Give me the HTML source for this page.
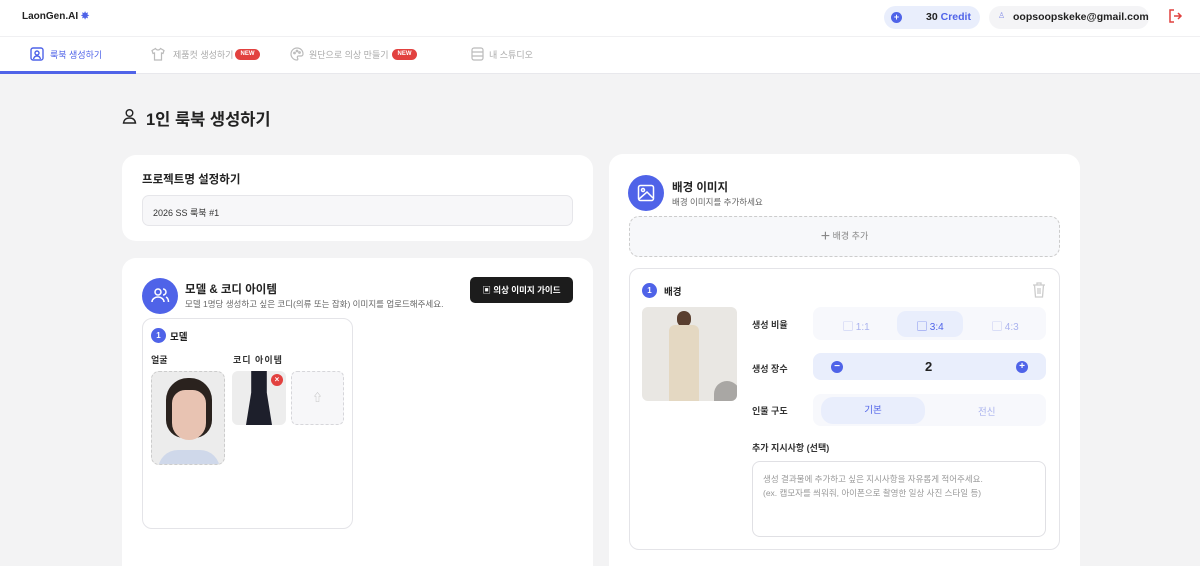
<!DOCTYPE html>
<html><head><meta charset="utf-8"><style>
*{box-sizing:border-box;margin:0;padding:0}
html,body{width:1200px;height:566px;overflow:hidden}
body{background:#f3f3f4;font-family:"Liberation Sans","Noto Sans CJK KR",sans-serif;color:#222;position:relative}
.a{position:absolute}
.hdr{left:0;top:0;width:1200px;height:74px;background:#fff;border-bottom:1px solid #e8e8ec}
.card{background:#fff;border-radius:14px;position:absolute}
.t{font-size:10px;color:#bbb}
.lbl{font-size:9px;font-weight:bold;color:#333}
</style></head><body>
<div class="a hdr"></div>
<div class="a" style="left:0;top:36px;width:1200px;border-top:1px solid #f0f0f2"></div>
<div class="a" style="left:22px;top:11px;font-size:10px;font-weight:bold">LaonGen.AI <span style="color:#4f63e8">✸</span></div>
<div class="a" style="left:884px;top:6px;width:96px;height:23px;border-radius:12px;background:#e9eefc"></div>
<div class="a" style="left:891px;top:12px;width:11px;height:11px;border-radius:50%;background:#4f63e8;color:#fff;font-size:9px;line-height:11px;text-align:center;font-weight:bold">+</div>
<div class="a" style="left:926px;top:11px;font-size:10.5px;font-weight:bold">30 <span style="color:#4f63e8">Credit</span></div>
<div class="a" style="left:989px;top:6px;width:160px;height:23px;border-radius:12px;background:#f4f4f6"></div>
<div class="a" style="left:998px;top:11px;font-size:8px;color:#8a93e8">♙</div>
<div class="a" style="left:1013px;top:11px;font-size:10.5px;font-weight:bold;color:#222">oopsoopskeke@gmail.com</div>
<svg class="a" style="left:1167px;top:8px" width="16" height="16" viewBox="0 0 16 16" fill="none" stroke="#e0413f" stroke-width="1.5"><path d="M7 2H3v12h4M7 8h7M11 5l3 3-3 3"/></svg>
<!-- tabs -->
<svg class="a" style="left:30px;top:47px" width="14" height="14" viewBox="0 0 14 14" fill="none" stroke="#4f63e8" stroke-width="1.4"><rect x="1" y="1" width="12" height="12" rx="2"/><circle cx="7" cy="6" r="2"/><path d="M3.5 12c.5-2 2-3 3.5-3s3 1 3.5 3"/></svg>
<div class="a" style="left:50px;top:48px;font-size:9px;color:#4f63e8">룩북 생성하기</div>
<div class="a" style="left:0;top:71px;width:136px;height:3px;background:#4f63e8"></div>
<svg class="a" style="left:151px;top:47px" width="14" height="14" viewBox="0 0 14 14" fill="none" stroke="#bbb" stroke-width="1.2"><path d="M4.5 1.5L1 3.5l1 3 1.5-.5V13h7V6l1.5.5 1-3-3.5-2c-.5 1-1.5 1.5-2.5 1.5S5 2.5 4.5 1.5z"/></svg>
<div class="a" style="left:173px;top:48px;font-size:9px;color:#aaa">제품컷 생성하기</div>
<div class="a" style="left:235px;top:49px;width:25px;height:11px;border-radius:6px;background:#e2413f;color:#fff;font-size:6px;line-height:11px;text-align:center;font-weight:bold">NEW</div>
<svg class="a" style="left:290px;top:47px" width="14" height="14" viewBox="0 0 14 14" fill="none" stroke="#bbb" stroke-width="1.2"><path d="M7 1a6 6 0 100 12c1 0 1-1 .5-2s0-2 1-2H11a2 2 0 002-2C13 3.5 10.5 1 7 1z"/><circle cx="4.5" cy="6" r=".8"/><circle cx="7" cy="4" r=".8"/><circle cx="9.5" cy="5.5" r=".8"/></svg>
<div class="a" style="left:309px;top:48px;font-size:9px;color:#aaa">원단으로 의상 만들기</div>
<div class="a" style="left:392px;top:49px;width:25px;height:11px;border-radius:6px;background:#e2413f;color:#fff;font-size:6px;line-height:11px;text-align:center;font-weight:bold">NEW</div>
<svg class="a" style="left:471px;top:47px" width="13" height="14" viewBox="0 0 13 14" fill="none" stroke="#bbb" stroke-width="1.2"><rect x="1" y="1" width="11" height="12" rx="2"/><path d="M1 5h11M1 9h11"/></svg>
<div class="a" style="left:489px;top:48px;font-size:9px;color:#aaa">내 스튜디오</div>
<!-- title -->
<svg class="a" style="left:122px;top:108px" width="15" height="16" viewBox="0 0 15 16" fill="none" stroke="#222" stroke-width="1.4"><circle cx="7.5" cy="5" r="3.3"/><path d="M1.5 15c.5-3.5 3-5 6-5s5.5 1.5 6 5z"/></svg>
<div class="a" style="left:146px;top:106px;font-size:16.5px;font-weight:bold">1인 룩북 생성하기</div>
<!-- card1 -->
<div class="card" style="left:122px;top:155px;width:471px;height:86px"></div>
<div class="a" style="left:142px;top:171px;font-size:11.5px;font-weight:bold">프로젝트명 설정하기</div>
<div class="a" style="left:142px;top:195px;width:431px;height:31px;border:1px solid #e6e6ea;border-radius:7px;background:#f7f7f9;font-size:9px;padding:10px;color:#333">2026 SS 룩북 #1</div>
<!-- card2 -->
<div class="card" style="left:122px;top:258px;width:471px;height:330px"></div>
<div class="a" style="left:142px;top:278px;width:36px;height:36px;border-radius:50%;background:#4f63e8"></div>
<svg class="a" style="left:150px;top:286px" width="20" height="20" viewBox="0 0 20 20" fill="none" stroke="#fff" stroke-width="1.5"><circle cx="8" cy="6" r="3"/><path d="M2 16c0-3 3-5 6-5s6 2 6 5M13 3a3 3 0 010 6M16 11c1.5.8 2.5 2.5 2.5 5"/></svg>
<div class="a" style="left:185px;top:281px;font-size:11.5px;font-weight:bold">모델 &amp; 코디 아이템</div>
<div class="a" style="left:185px;top:298px;font-size:8.5px;color:#666">모델 1명당 생성하고 싶은 코디(의류 또는 잡화) 이미지를 업로드해주세요.</div>
<div class="a" style="left:470px;top:277px;width:103px;height:26px;border-radius:5px;background:#1c1c1c;color:#fff;font-size:8.5px;font-weight:bold;line-height:26px;text-align:center">▣ 의상 이미지 가이드</div>
<div class="a" style="left:142px;top:318px;width:211px;height:211px;border:1px solid #e4e4e8;border-radius:10px;background:#fff"></div>
<div class="a" style="left:151px;top:328px;width:15px;height:15px;border-radius:50%;background:#4f63e8;color:#fff;font-size:8px;font-weight:bold;text-align:center;line-height:15px">1</div>
<div class="a" style="left:170px;top:329px;font-size:9.5px;font-weight:bold">모델</div>
<div class="a lbl" style="left:151px;top:353px">얼굴</div>
<div class="a lbl" style="left:233px;top:353px;letter-spacing:1px">코디 아이템</div>
<div class="a" style="left:151px;top:371px;width:74px;height:94px;border-radius:8px;border:1px dashed #ccc;background:#ececec;overflow:hidden">
<div class="a" style="left:14px;top:6px;width:46px;height:60px;border-radius:22px 22px 18px 18px;background:#2a221e"></div>
<div class="a" style="left:20px;top:18px;width:34px;height:50px;border-radius:14px 14px 18px 18px;background:#e8c3b2"></div>
<div class="a" style="left:6px;top:78px;width:62px;height:20px;border-radius:20px 20px 0 0;background:#cfd8ea"></div></div>
<div class="a" style="left:232px;top:371px;width:54px;height:54px;border-radius:6px;background:#ededed;overflow:hidden">
<div class="a" style="left:14px;top:0;width:26px;height:54px;background:#1d1f2b;clip-path:polygon(20% 0,80% 0,80% 40%,100% 100%,0 100%,20% 40%)"></div></div>
<div class="a" style="left:271px;top:374px;width:12px;height:12px;border-radius:50%;background:#e2413f;color:#fff;font-size:8px;line-height:12px;text-align:center;font-weight:bold">×</div>
<div class="a" style="left:291px;top:371px;width:53px;height:54px;border:1px dashed #d6d6da;border-radius:6px;background:#f7f7f9;color:#bbb;font-size:10px;text-align:center;line-height:54px">⇧</div>
<!-- right card -->
<div class="card" style="left:609px;top:154px;width:471px;height:430px"></div>
<div class="a" style="left:628px;top:175px;width:36px;height:36px;border-radius:50%;background:#4f63e8"></div>
<svg class="a" style="left:637px;top:184px" width="18" height="18" viewBox="0 0 18 18" fill="none" stroke="#fff" stroke-width="1.5"><rect x="1.5" y="1.5" width="15" height="15" rx="2"/><circle cx="6" cy="6" r="1.5"/><path d="M2 15l8-7 6 6"/></svg>
<div class="a" style="left:672px;top:179px;font-size:11.5px;font-weight:bold">배경 이미지</div>
<div class="a" style="left:672px;top:196px;font-size:8.5px;color:#666">배경 이미지를 추가하세요</div>
<div class="a" style="left:629px;top:216px;width:431px;height:41px;border:1.3px dashed #ccc;border-radius:10px;background:#f7f8fa;text-align:center;line-height:39px;font-size:9px;color:#888"><span style="font-size:16px;vertical-align:-2px">+</span> 배경 추가</div>
<div class="a" style="left:629px;top:268px;width:431px;height:282px;border:1px solid #e4e4e8;border-radius:10px;background:#fff"></div>
<div class="a" style="left:642px;top:283px;width:15px;height:15px;border-radius:50%;background:#4f63e8;color:#fff;font-size:8px;font-weight:bold;text-align:center;line-height:15px">1</div>
<div class="a" style="left:664px;top:284px;font-size:9.5px;font-weight:bold">배경</div>
<svg class="a" style="left:1032px;top:282px" width="14" height="16" viewBox="0 0 14 16" fill="none" stroke="#ccc" stroke-width="1.3"><path d="M1 3h12M5 3V1h4v2M2.5 3l1 12h7l1-12M6 6v6M8 6v6"/></svg>
<div class="a" style="left:642px;top:307px;width:95px;height:94px;border-radius:6px;background:#e9e7e3;overflow:hidden">
<div class="a" style="left:35px;top:4px;width:14px;height:16px;border-radius:7px;background:#5a3f2f"></div>
<div class="a" style="left:27px;top:18px;width:30px;height:76px;background:#e4d8c2;border-radius:6px 6px 0 0"></div>
<div class="a" style="left:72px;top:74px;width:26px;height:26px;border-radius:50% 50% 0 0;background:#a9a7a4"></div></div>
<div class="a lbl" style="left:752px;top:318px">생성 비율</div>
<div class="a lbl" style="left:752px;top:362px">생성 장수</div>
<div class="a lbl" style="left:752px;top:404px">인물 구도</div>
<div class="a lbl" style="left:752px;top:441px">추가 지시사항 (선택)</div>
<div class="a" style="left:813px;top:307px;width:233px;height:33px;border-radius:8px;background:#f7f8fc"></div>
<div class="a" style="left:897px;top:311px;width:66px;height:26px;border-radius:9px;background:#e9eefc"></div>
<div class="a t" style="left:843px;top:318px;color:#aab3ee">▢ 1:1</div>
<div class="a t" style="left:917px;top:318px;color:#4f63e8">▢ 3:4</div>
<div class="a t" style="left:992px;top:318px;color:#aab3ee">▢ 4:3</div>
<div class="a" style="left:813px;top:353px;width:233px;height:27px;border-radius:8px;background:#e9eefc"></div>
<div class="a" style="left:831px;top:361px;width:12px;height:12px;border-radius:50%;background:#4f63e8;color:#fff;font-size:10px;line-height:11px;text-align:center;font-weight:bold">−</div>
<div class="a" style="left:925px;top:359px;font-size:13px;font-weight:bold">2</div>
<div class="a" style="left:1016px;top:361px;width:12px;height:12px;border-radius:50%;background:#4f63e8;color:#fff;font-size:10px;line-height:12px;text-align:center;font-weight:bold">+</div>
<div class="a" style="left:813px;top:394px;width:233px;height:32px;border-radius:8px;background:#f7f8fc"></div>
<div class="a" style="left:821px;top:397px;width:104px;height:27px;border-radius:12px;background:#e9eefc;color:#4f63e8;font-size:9.5px;text-align:center;line-height:27px">기본</div>
<div class="a" style="left:978px;top:404px;font-size:9.5px;color:#aab3ee">전신</div>
<div class="a" style="left:752px;top:461px;width:294px;height:76px;border:1px solid #e0e0e4;border-radius:8px;padding:10px;font-size:8.5px;color:#999;line-height:14px">생성 결과물에 추가하고 싶은 지시사항을 자유롭게 적어주세요.<br>(ex. 캡모자를 씌워줘, 아이폰으로 촬영한 일상 사진 스타일 등)</div>
</body></html>
